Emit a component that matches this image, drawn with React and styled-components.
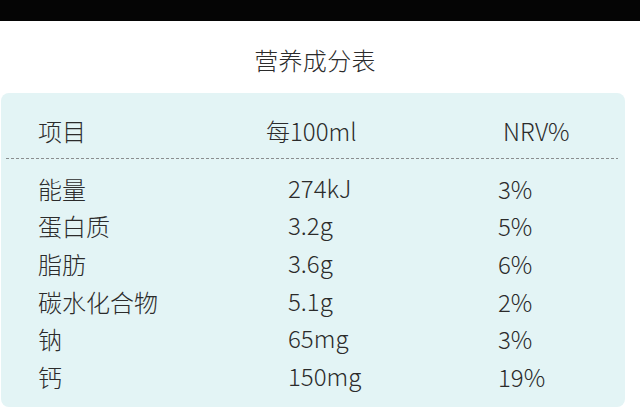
import React from 'react'
import styled, { createGlobalStyle } from 'styled-components'

const GlobalStyle = createGlobalStyle`
  html, body {
    margin: 0;
    padding: 0;
    background: #ffffff;
  }
  body {
    font-family: "Noto Sans CJK SC", "Noto Sans", sans-serif;
    color: #2b2b2b;
  }
`

const Page = styled.div`
  width: 640px;
  height: 411px;
  overflow: hidden;
  display: flex;
  flex-direction: column;
`

const TopBar = styled.div`
  height: 21px;
  background: #050505;
  flex-shrink: 0;
`

const Title = styled.h1`
  margin: 0;
  height: 72px;
  display: flex;
  align-items: center;
  justify-content: center;
  padding: 4px 10px 0 0;
  box-sizing: border-box;
  font-size: 24px;
  font-weight: 300;
  color: #2b2b2b;
  letter-spacing: 0.3px;
`

const Panel = styled.div`
  margin-left: 1px;
  width: 624px;
  height: 314px;
  box-sizing: border-box;
  background: #e3f4f5;
  border-radius: 8px;
  padding: 20px 0 11px;
`

const HeaderRow = styled.div`
  display: grid;
  grid-template-columns: 228px 237px 1fr;
  padding-left: 37px;
  height: 36px;
  align-items: center;
  font-size: 24px;
  font-weight: 300;
`

const Dashed = styled.div`
  margin: 9px 7px 11px 5px;
  height: 1px;
  background: repeating-linear-gradient(to right, #8a8e8f 0 3px, transparent 3px 5px);
`

const Row = styled.div`
  display: grid;
  grid-template-columns: 250px 210px 1fr;
  padding-left: 37px;
  height: 37.6px;
  align-items: center;
  font-size: 24px;
  font-weight: 300;
`

const Cell = styled.span`
  white-space: nowrap;
  line-height: 1;
  transform: translateY(${({ $up }) => ($up ? '-1px' : '0')});
`

const rows = [
  ['能量', '274kJ', '3%'],
  ['蛋白质', '3.2g', '5%'],
  ['脂肪', '3.6g', '6%'],
  ['碳水化合物', '5.1g', '2%'],
  ['钠', '65mg', '3%'],
  ['钙', '150mg', '19%'],
]

export default function App() {
  return (
    <Page>
      <GlobalStyle />
      <TopBar />
      <Title>营养成分表</Title>
      <Panel>
        <HeaderRow>
          <Cell>项目</Cell>
          <Cell>每100ml</Cell>
          <Cell>NRV%</Cell>
        </HeaderRow>
        <Dashed />
        {rows.map(([name, value, nrv]) => (
          <Row key={name}>
            <Cell>{name}</Cell>
            <Cell $up>{value}</Cell>
            <Cell>{nrv}</Cell>
          </Row>
        ))}
      </Panel>
    </Page>
  )
}
